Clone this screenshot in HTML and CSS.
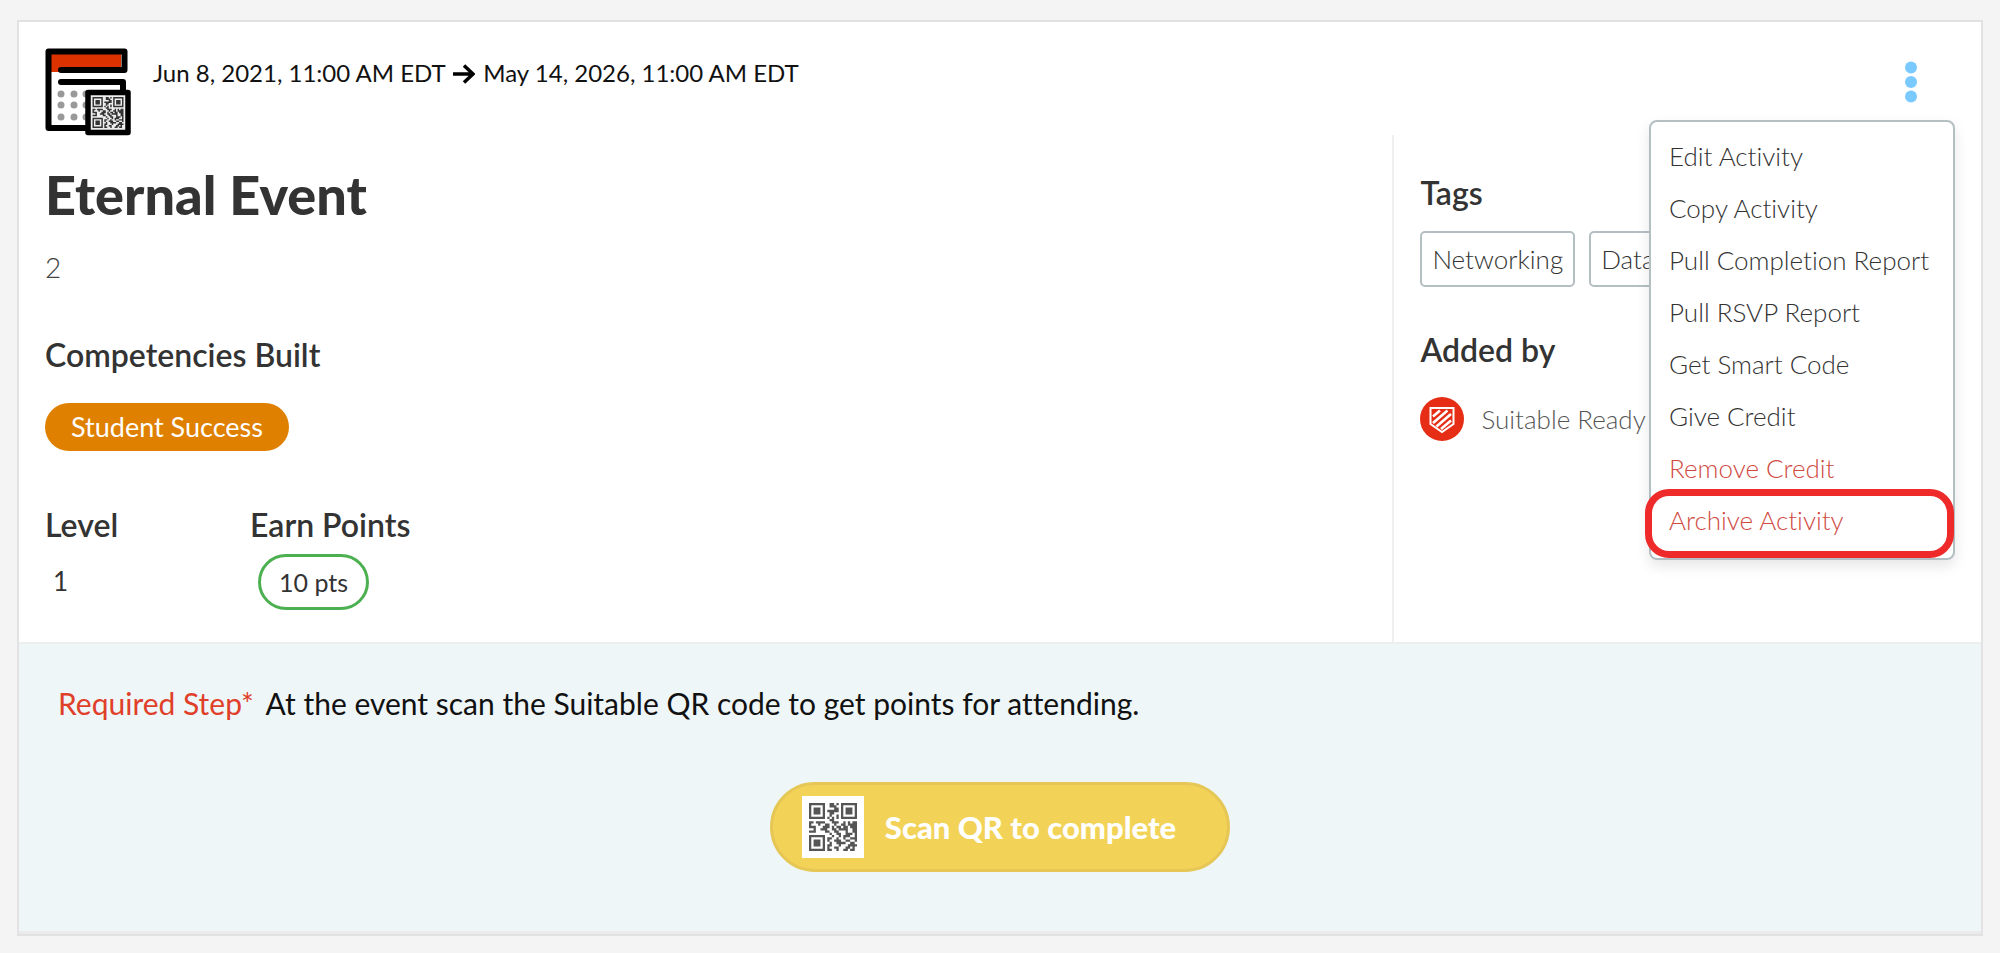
FILE: index.html
```html
<!DOCTYPE html>
<html lang="en">
<head>
<meta charset="utf-8">
<title>Eternal Event</title>
<link rel="stylesheet" href="styles.css">
</head>
<body>
<svg class="defs" aria-hidden="true">
  <symbol id="qr" viewBox="0 0 21 21">
    <path fill="none" stroke="currentColor" stroke-width="1" d="M0 .5h7m2 0h2m1 0h1m1 0h7M0 1.5h1m5 0h1m2 0h3m2 0h1m5 0h1M0 2.5h1m1 0h3m1 0h1m4 0h2m1 0h1m1 0h3m1 0h1M0 3.5h1m1 0h3m1 0h1m1 0h5m1 0h1m1 0h3m1 0h1M0 4.5h1m1 0h3m1 0h1m2 0h2m3 0h1m1 0h3m1 0h1M0 5.500h1m5 0h1m2 0h1m2 0h1m1 0h1m5 0h1M0 6.5h7m1 0h1m1 0h1m1 0h1m1 0h7M9 7.5h2M0 8.5h2m1 0h4m3 0h3m2 0h1m1 0h1m1 0h2M0 9.5h1m3 0h1m2 0h2m2 0h1m2 0h2m1 0h4M0 10.5h3m3 0h3m1 0h1m1 0h2m1 0h2m1 0h3M2 11.5h1m2 0h3m2 0h2m1 0h4m2 0h2M0 12.5h3m4 0h2m2 0h2m3 0h1m2 0h2M9 13.5h1m2 0h2m2 0h3m1 0h1M0 14.5h7m3 0h1m2 0h1m1 0h3m2 0h1M0 15.5h1m5 0h1m1 0h2m2 0h1m2 0h1m2 0h3M0 16.5h1m1 0h3m1 0h1m1 0h1m2 0h3m2 0h2m2 0h1M0 17.5h1m1 0h3m1 0h1m2 0h1m2 0h4m2 0h2M0 18.5h1m1 0h3m1 0h1m1 0h2m3 0h1m3 0h4M0 19.5h1m5 0h1m1 0h1m2 0h2m3 0h2m1 0h1M0 20.5h7m1 0h2m2 0h1m2 0h2m1 0h2"/>
  </symbol>
</svg>
<main class="card">
  <header class="head">
    <svg class="event-icon" viewBox="0 0 86 88" aria-hidden="true">
      <path d="M6 3h70v21H6z" fill="#dc3200"/>
      <g fill="#999"><circle cx="16" cy="46" r="3.5"/><circle cx="29" cy="46" r="3.5"/><circle cx="41" cy="46" r="3.5"/><circle cx="16" cy="57" r="3.5"/><circle cx="29" cy="57" r="3.5"/><circle cx="41" cy="57" r="3.5"/><circle cx="16" cy="69" r="3.5"/><circle cx="29" cy="69" r="3.5"/><circle cx="41" cy="69" r="3.5"/></g>
      <path d="M16 22h63.500V3.500H3.500V80H44M16 34h62v12" fill="none" stroke="#000" stroke-width="6" stroke-linecap="round" stroke-linejoin="round"/>
      <rect x="43" y="44.500" width="40" height="40" fill="#eee" stroke="#000" stroke-width="5.500" stroke-linejoin="round"/>
      <use href="#qr" x="47" y="49" width="32" height="31"/>
    </svg>
    <p class="dates"><time>Jun 8, 2021, 11:00 AM EDT</time>
      <svg class="arrow" viewBox="0 0 22 20" aria-hidden="true"><path d="M0 10h20M11 1.500l9 8.500-9 8.500" fill="none" stroke="#000" stroke-width="3.500"/></svg>
      <time>May 14, 2026, 11:00 AM EDT</time></p>
    <div class="actions">
      <button class="kebab" type="button" aria-label="Activity actions" aria-expanded="true">
        <svg viewBox="0 0 12 42"><g fill="#7acaff"><circle cx="6" cy="6.500" r="6"/><circle cx="6" cy="21" r="6"/><circle cx="6" cy="35.500" r="6"/></g></svg>
      </button>
      <div class="menu">
        <button type="button">Edit Activity</button>
        <button type="button">Copy Activity</button>
        <button type="button">Pull Completion Report</button>
        <button type="button">Pull RSVP Report</button>
        <button type="button">Get Smart Code</button>
        <button type="button">Give Credit</button>
        <button type="button" class="danger">Remove Credit</button>
        <button type="button" class="danger marked">Archive Activity</button>
      </div>
    </div>
  </header>
  <div class="body">
    <section class="main">
      <h1>Eternal Event</h1>
      <p class="desc">2</p>
      <h2>Competencies Built</h2>
      <span class="competency">Student Success</span>
      <div class="stats">
        <div class="stat"><h2>Level</h2><span class="level">1</span></div>
        <div class="stat"><h2>Earn Points</h2><span class="points">10 pts</span></div>
      </div>
    </section>
    <aside class="side">
      <h2>Tags</h2>
      <div class="tags"><span class="tag">Networking</span><span class="tag">Data</span></div>
      <h2>Added by</h2>
      <div class="author">
        <svg class="avatar" viewBox="0 0 44 44" aria-hidden="true">
          <circle cx="22" cy="22" r="22" fill="#e62e17"/>
          <path d="M10.500 11h23v16L22 35 10.500 27z" fill="none" stroke="#fff" stroke-width="2"/>
          <path d="M13 19.500l7-6M13 26l14.500-12.500M16.500 29.500L31 17M21 32l10-8.500" stroke="#fff" stroke-width="2.600"/>
        </svg>
        <span>Suitable Ready</span>
      </div>
    </aside>
  </div>
  <footer class="foot">
    <p class="step"><span class="required">Required Step*</span> At the event scan the Suitable QR code to get points for attending.</p>
    <button class="scan" type="button"><span class="scan-qr"><svg viewBox="0 0 21 21"><use href="#qr" width="21" height="21"/></svg></span>Scan QR to complete</button>
  </footer>
</main>
</body>
</html>
```
FILE: styles.css
```css
* { box-sizing: border-box; }
body {
  margin: 0;
  padding: 20px 17px;
  background: #f4f4f4;
  font-family: Lato, "Open Sans", sans-serif;
  font-size: 26px;
  font-variant-ligatures: none;
  line-height: 32px;
  color: #333;
}
h1, h2, p { margin: 0; }
button { font: inherit; color: inherit; border: 0; background: none; cursor: pointer; }
.defs { position: absolute; width: 0; height: 0; }
.card { background: #fff; border: 2px solid #e2e2e2; }
.head { display: flex; gap: 22px; padding: 26px 26px 0; height: 113px; }
.event-icon { width: 86px; height: 88px; flex: none; }
.dates { flex: 1; padding-top: 9px; font-size: 24px; color: #111; }
.arrow { width: 22px; height: 20px; margin: 0 2px; vertical-align: -2px; }
.actions { position: relative; padding: 13px 28px 0 0; }
.kebab { display: block; padding: 0; width: 32px; height: 42px; }
.kebab svg { display: block; width: 12px; height: 42px; margin: 0 auto; }
.menu {
  position: absolute;
  top: 72px;
  right: 0;
  z-index: 2;
  display: flex;
  flex-direction: column;
  width: 306px;
  padding: 8px 0 12px;
  background: #fff;
  border: 2px solid #b4bfc3;
  border-radius: 8px;
  box-shadow: 0 6px 14px rgba(0, 0, 0, 0.1);
  font-weight: 300;
}
.menu button { position: relative; padding: 10px 18px; text-align: left; white-space: nowrap; }
.menu .danger { color: #d04a42; }
.marked::after {
  content: "";
  position: absolute;
  inset: -5px -1px -12px -6px;
  border: 7px solid #ee2a2a;
  border-radius: 24px;
}
.body { display: grid; grid-template-columns: 70fr 30fr; }
.main { padding: 26px 26px 32px; }
h1 { font-size: 54px; line-height: 68px; font-weight: 900; }
.desc { margin-top: 22px; font-size: 28px; line-height: 32px; font-weight: 300; color: #444; }
h2 { font-size: 32px; line-height: 36px; font-weight: 600; }
.main > h2 { margin-top: 54px; }
.competency {
  display: inline-block;
  margin-top: 30px;
  padding: 0 26px;
  border-radius: 24px;
  background: #df8000;
  color: #fff;
  font-size: 27px;
  line-height: 48px;
}
.stats { display: grid; grid-template-columns: 205px auto; margin-top: 56px; }
.stat { display: flex; flex-direction: column; align-items: flex-start; gap: 11px; }
.level { padding: 0 8px; line-height: 54px; }
.points { margin-left: 8px; padding: 0 18px; border: 3px solid #4caf50; border-radius: 28px; font-size: 25px; line-height: 50px; }
.side { padding: 40px 26px; border-left: 2px solid #f0f0f0; }
.tags { display: flex; gap: 14px; margin: 20px 0 45px; }
.tag { padding: 0 10px; border: 2px solid #b4bfc3; border-radius: 5px; font-weight: 300; line-height: 52px; white-space: nowrap; }
.author { display: flex; align-items: center; gap: 17px; margin-top: 29px; font-weight: 300; color: #555; white-space: nowrap; }
.avatar { width: 44px; height: 44px; }
.foot {
  display: flex;
  flex-direction: column;
  align-items: center;
  gap: 61px;
  padding: 41px 39px 59px;
  background: #eef6f8;
  border-top: 2px solid #eee;
  border-bottom: 3px solid #ebebeb;
}
.step { align-self: stretch; font-size: 30px; line-height: 36px; color: #111; }
.required { color: #e0402a; margin-right: 5px; }
.scan {
  display: flex;
  align-items: center;
  gap: 21px;
  height: 90px;
  padding: 0 51px 0 29px;
  border: 3px solid #e6c755;
  border-radius: 45px;
  background: #f2d358;
  color: #fff;
  font-size: 31px;
  font-weight: 900;
}
.scan-qr { display: grid; place-items: center; width: 62px; height: 62px; background: #fff; color: #555; }
.scan-qr svg { width: 48px; height: 48px; }
```
